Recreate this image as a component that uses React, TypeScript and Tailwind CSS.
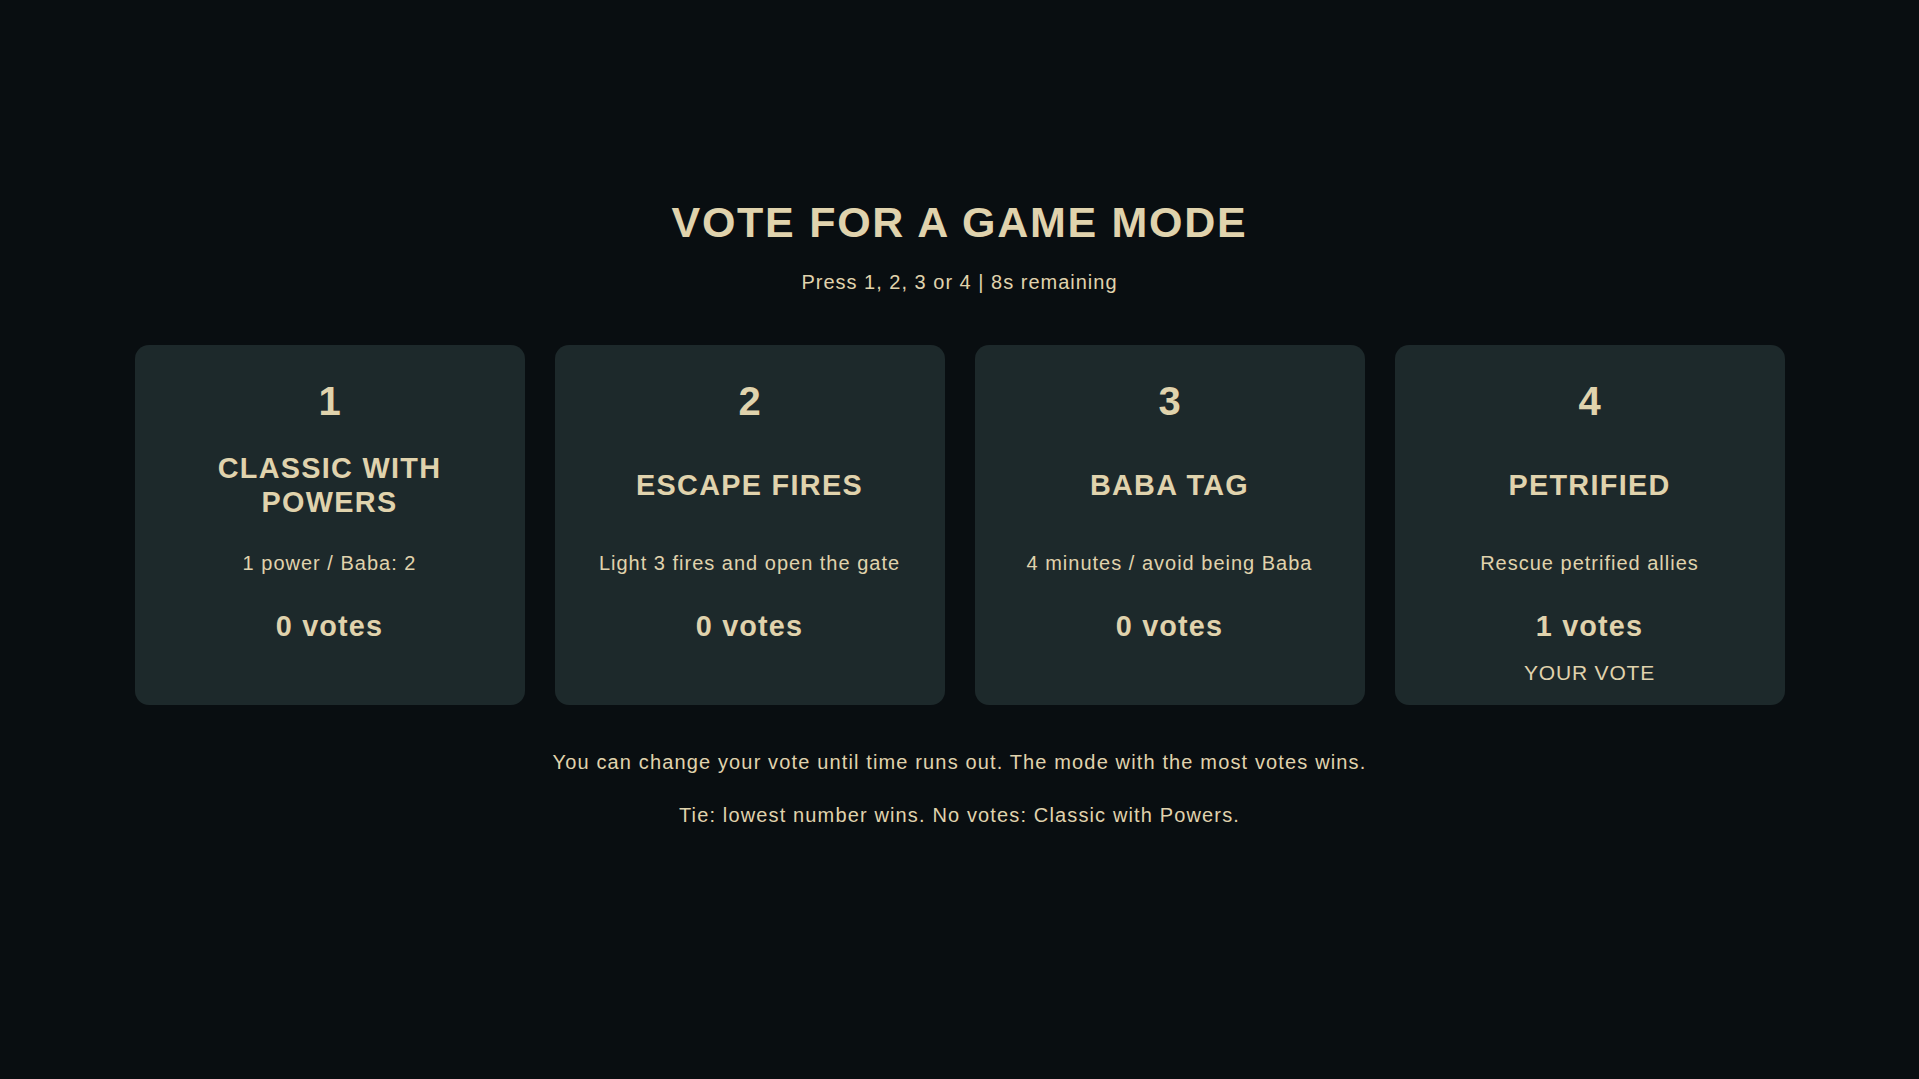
const modes = [
  { key: 1, name: "CLASSIC WITH POWERS", desc: "1 power / Baba: 2", votes: 0, mine: false },
  { key: 2, name: "ESCAPE FIRES", desc: "Light 3 fires and open the gate", votes: 0, mine: false },
  { key: 3, name: "BABA TAG", desc: "4 minutes / avoid being Baba", votes: 0, mine: false },
  { key: 4, name: "PETRIFIED", desc: "Rescue petrified allies", votes: 1, mine: true },
];

function ModeCard({ mode }: { mode: (typeof modes)[number] }) {
  return (
    <div className="flex h-[360px] flex-col items-center rounded-[14px] bg-[#1d292b] px-6 pt-[36px] text-center">
      <div className="text-[40px] font-bold leading-none">{mode.key}</div>
      <div className="mt-[30px] flex h-[70px] w-[330px] items-center justify-center">
        <h2 className="text-[28.8px] font-bold leading-[1.17] tracking-[0.045em]">{mode.name}</h2>
      </div>
      <p className="mt-[32px] text-[20px] leading-none tracking-[0.05em]">{mode.desc}</p>
      <p className="mt-[39px] text-[28.8px] font-bold leading-none tracking-[0.04em]">{mode.votes} votes</p>
      {mode.mine && <p className="mt-[21px] text-[21px] leading-none tracking-[0.04em]">YOUR VOTE</p>}
    </div>
  );
}

export default function App() {
  return (
    <main
      className="flex min-h-screen flex-col items-center bg-[#090e11] pt-[201px] text-[#e0d3ad]"
      style={{ fontFamily: '"Liberation Sans", Arial, sans-serif' }}
    >
      <h1 className="text-[43px] font-bold leading-none tracking-[0.04em]">VOTE FOR A GAME MODE</h1>
      <p className="mt-[28px] text-[20px] leading-none tracking-[0.05em]">Press 1, 2, 3 or 4 | 8s remaining</p>

      <section className="mt-[53px] grid w-[1650px] grid-cols-4 gap-[30px]">
        {modes.map((m) => (
          <ModeCard key={m.key} mode={m} />
        ))}
      </section>

      <p className="mt-[47px] text-[20px] leading-none tracking-[0.057em]">
        You can change your vote until time runs out. The mode with the most votes wins.
      </p>
      <p className="mt-[33px] text-[20px] leading-none tracking-[0.057em]">
        Tie: lowest number wins. No votes: Classic with Powers.
      </p>
    </main>
  );
}
